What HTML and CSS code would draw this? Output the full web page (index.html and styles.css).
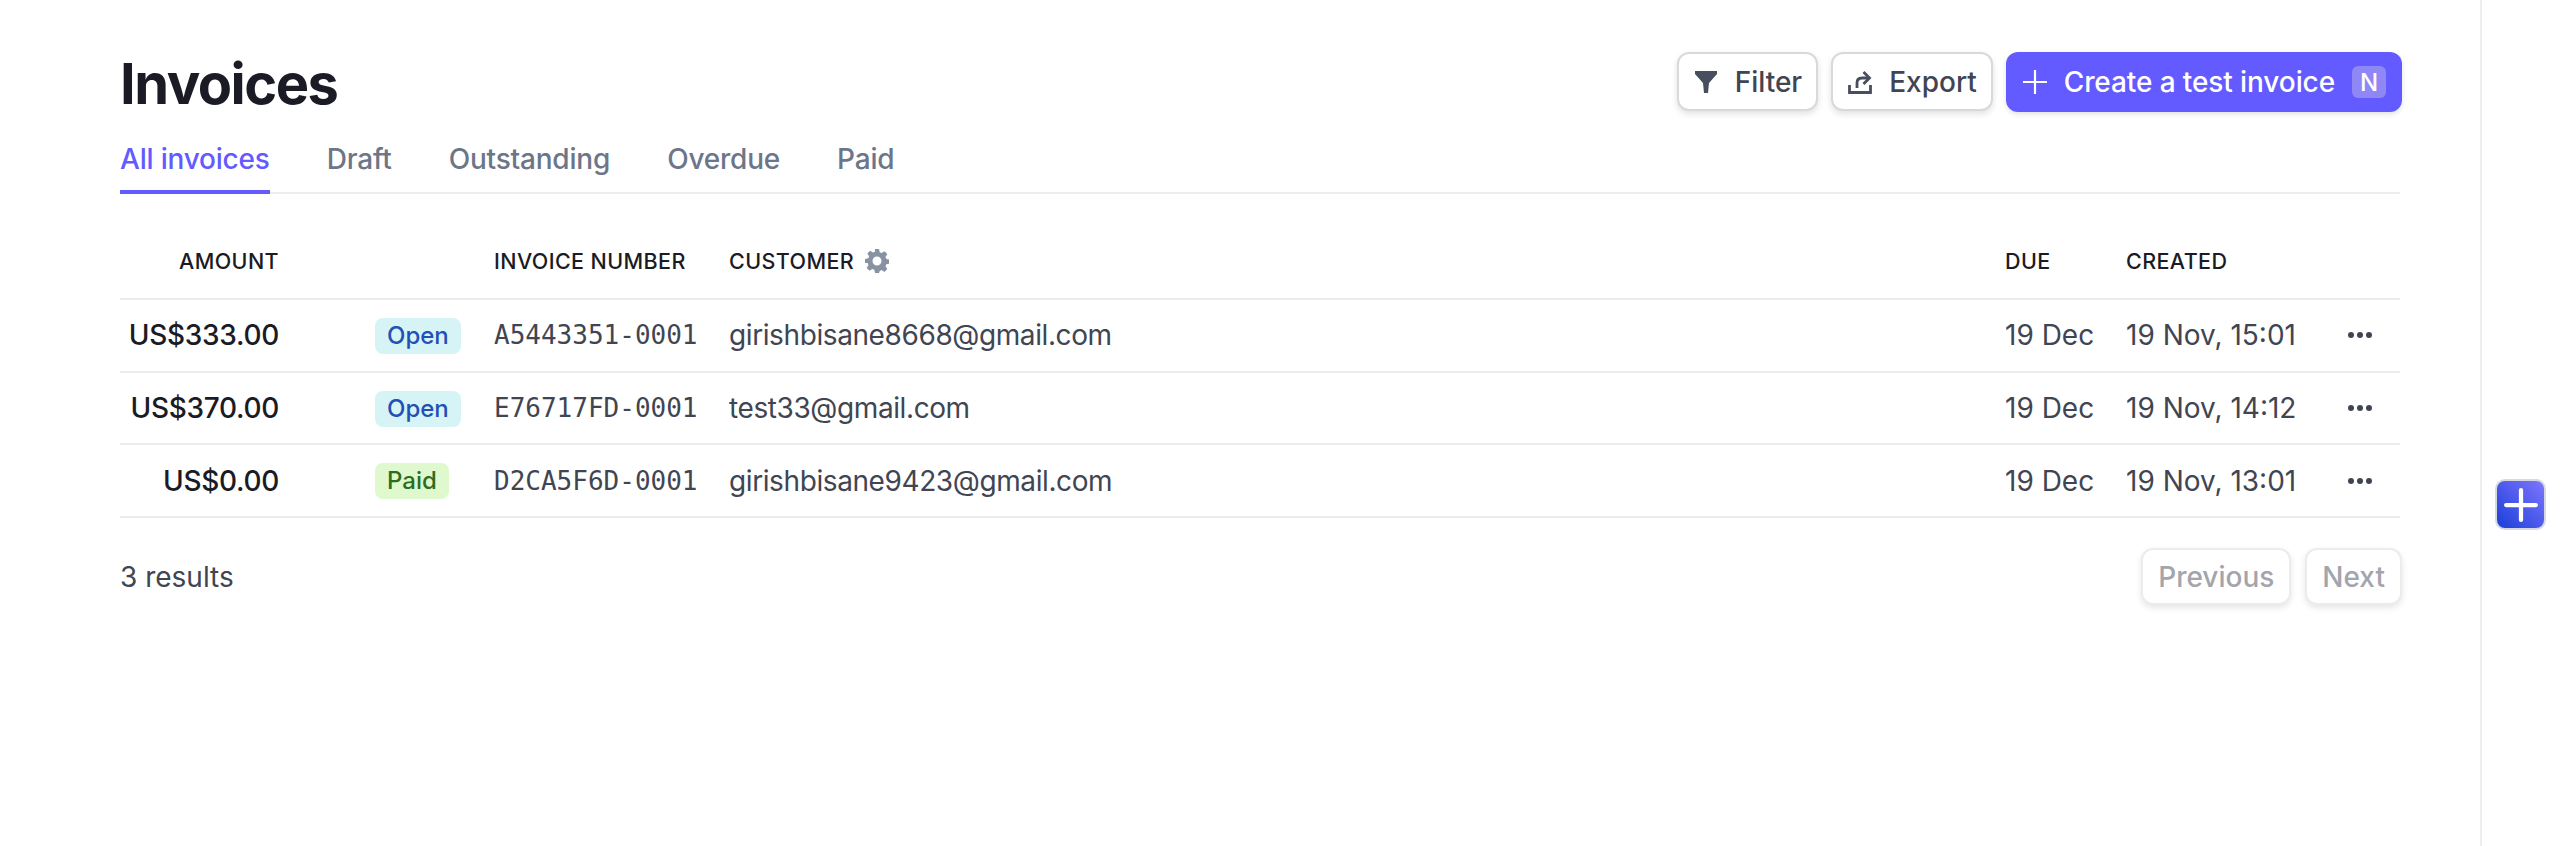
FILE: index.html
```html
<!DOCTYPE html>
<html lang="en">
<head>
    <meta charset="UTF-8">
    <title>Invoices</title>
    <link rel="stylesheet" href="styles.css">
</head>
<body>
    <main class="content">
        <header class="page-head">
            <h1>Invoices</h1>
            <div class="actions">
                <button class="btn">
                    <svg class="btn-icon" viewBox="0 0 24 24"><path d="M1 1h22v3l-8 9-1 10h-4l-1-10-8-9z" fill="#474e5e"/></svg>
                    Filter
                </button>
                <button class="btn">
                    <svg class="btn-icon" viewBox="0 0 24 24" fill="none" stroke="#474e5e" stroke-width="2.8"><path d="M1.500 15v7.500h21V15"/><path d="M9 18v-5c0-3 1.500-5 5-5h7"/><path d="M15.500 2l6 6-6 6"/></svg>
                    Export
                </button>
                <button class="btn btn-primary">
                    <svg class="btn-icon" viewBox="0 0 24 24" fill="none" stroke="#fff" stroke-width="2.2"><path d="M12 0v24M0 12h24"/></svg>
                    Create a test invoice
                    <span class="key">N</span>
                </button>
            </div>
        </header>

        <nav class="tabs">
            <a class="tab active">All invoices</a>
            <a class="tab">Draft</a>
            <a class="tab">Outstanding</a>
            <a class="tab">Overdue</a>
            <a class="tab">Paid</a>
        </nav>

        <table class="invoices">
            <colgroup>
                <col class="col-amount">
                <col class="col-status">
                <col class="col-number">
                <col>
                <col class="col-due">
                <col class="col-created">
                <col class="col-more">
            </colgroup>
            <thead>
                <tr>
                    <th class="amount">AMOUNT</th>
                    <th></th>
                    <th>INVOICE NUMBER</th>
                    <th>
                        <span class="customer-head">CUSTOMER
                            <svg class="gear" viewBox="0 0 24 24"><path fill="#8792a2" fill-rule="evenodd" d="M10 0h4l.7 3.300 2 .8 2.800-1.800 2.800 2.800-1.800 2.800.8 2 3.300.7v4l-3.300.7-.8 2 1.800 2.800-2.800 2.800-2.800-1.800-2 .8L14 24h-4l-.7-3.300-2-.8-2.800 1.800-2.800-2.800 1.800-2.800-.8-2L0 14v-4l3.300-.7.8-2-1.800-2.800 2.800-2.800 2.800 1.800 2-.8zM12 7.500a4.500 4.500 0 1 0 0 9 4.500 4.500 0 0 0 0-9z"/></svg>
                        </span>
                    </th>
                    <th>DUE</th>
                    <th>CREATED</th>
                    <th></th>
                </tr>
            </thead>
            <tbody>
                <tr>
                    <td class="amount">US$333.00</td>
                    <td class="status"><span class="badge badge-open">Open</span></td>
                    <td class="number">A5443351-0001</td>
                    <td class="email">girishbisane8668@gmail.com</td>
                    <td>19 Dec</td>
                    <td>19 Nov, 15:01</td>
                    <td class="more"><span class="dots"><i></i><i></i><i></i></span></td>
                </tr>
                <tr>
                    <td class="amount">US$370.00</td>
                    <td class="status"><span class="badge badge-open">Open</span></td>
                    <td class="number">E76717FD-0001</td>
                    <td class="email">test33@gmail.com</td>
                    <td>19 Dec</td>
                    <td>19 Nov, 14:12</td>
                    <td class="more"><span class="dots"><i></i><i></i><i></i></span></td>
                </tr>
                <tr>
                    <td class="amount">US$0.00</td>
                    <td class="status"><span class="badge badge-paid">Paid</span></td>
                    <td class="number">D2CA5F6D-0001</td>
                    <td class="email">girishbisane9423@gmail.com</td>
                    <td>19 Dec</td>
                    <td>19 Nov, 13:01</td>
                    <td class="more"><span class="dots"><i></i><i></i><i></i></span></td>
                </tr>
            </tbody>
        </table>

        <footer class="table-foot">
            <span>3 results</span>
            <div class="pager">
                <button class="btn btn-disabled">Previous</button>
                <button class="btn btn-disabled">Next</button>
            </div>
        </footer>
    </main>
    <aside class="rail">
        <button class="fab">
            <svg viewBox="0 0 32 32" fill="none" stroke="#fff" stroke-width="4" stroke-linecap="round"><path d="M16 2v28M2 16h28"/></svg>
        </button>
    </aside>
</body>
</html>
```

FILE: styles.css
```css
* {
    box-sizing: border-box;
}
html, body {
    height: 100%;
}
body {
    display: flex;
    margin: 0;
    font-family: Inter, "Liberation Sans", sans-serif;
    font-size: 28px;
    color: #414552;
    background: #fff;
    overflow: hidden;
}
.content {
    width: 2482px;
    height: 100%;
    padding: 0 80px 0 120px;
    border-right: 2px solid #ebeef1;
}
.rail {
    flex: 1;
    padding: 479px 0 0 13px;
}

.page-head {
    display: flex;
    justify-content: space-between;
    align-items: flex-start;
    height: 128px;
    padding-top: 52px;
}
h1 {
    margin: 0;
    font-size: 56px;
    line-height: 64px;
    font-weight: 700;
    color: #1a1b25;
    letter-spacing: -1.500px;
}
.actions {
    display: flex;
    gap: 13px;
    margin-right: -2px;
}
.btn {
    display: flex;
    align-items: center;
    height: 59px;
    padding: 0 14px 0 15px;
    font: 500 28px Inter, sans-serif;
    color: #414552;
    background: #fff;
    border: 2px solid #d8d9dd;
    border-radius: 12px;
    box-shadow: 0 3px 6px rgba(0,0,0,0.12);
}
.btn-icon {
    width: 24px;
    height: 24px;
    margin-right: 17px;
    flex: none;
}
.btn-primary {
    height: 60px;
    padding: 0 16px 0 17px;
    color: #fff;
    background: #635bff;
    border: 0;
    box-shadow: 0 2px 5px rgba(60,66,87,0.16);
    letter-spacing: -0.1px;
}
.key {
    display: flex;
    align-items: center;
    justify-content: center;
    width: 34px;
    height: 32px;
    margin-left: 17px;
    font-size: 24px;
    background: #8e87f5;
    border-radius: 6px;
}
.btn-disabled {
    height: 57px;
    padding: 0 15px;
    color: #a3a5ad;
    border-color: #ebecef;
    box-shadow: 0 3px 6px rgba(0,0,0,0.1);
}

.tabs {
    display: flex;
    gap: 57px;
    height: 66px;
    border-bottom: 2px solid #ebeef1;
    font-weight: 500;
    color: #6c7688;
    letter-spacing: -0.2px;
}
.tab {
    height: 66px;
    line-height: 62px;
}
.tab.active {
    color: #635bff;
    border-bottom: 4px solid #635bff;
}

.invoices {
    width: 100%;
    table-layout: fixed;
    border-collapse: collapse;
}
.col-amount { width: 159px; }
.col-status { width: 215px; }
.col-number { width: 235px; }
.col-due { width: 121px; }
.col-created { width: 214px; }
.col-more { width: 60px; }
th {
    height: 105px;
    padding: 30px 0 0;
    text-align: left;
    font-size: 21.500px;
    font-weight: 500;
    letter-spacing: 0.4px;
    color: #1a1b25;
}
td {
    height: 72.700px;
    padding: 0;
    white-space: nowrap;
}
tr {
    border-bottom: 2px solid #ebeef1;
}
.amount {
    text-align: right;
}
td.amount {
    font-weight: 500;
    color: #1a1b25;
    letter-spacing: -0.3px;
}
.email {
    letter-spacing: -0.4px;
}
.customer-head {
    display: flex;
    align-items: center;
    gap: 11px;
}
.gear {
    width: 24px;
    height: 24px;
}
.status {
    padding-left: 96px;
}
.badge {
    display: inline-block;
    height: 36px;
    padding: 0 12px;
    line-height: 36px;
    font-size: 24px;
    font-weight: 500;
    border-radius: 8px;
    vertical-align: middle;
}
.badge-open {
    color: #2250b5;
    background: #d6f4f6;
}
.badge-paid {
    color: #2d6e1e;
    background: #dff8cd;
}
.number {
    font-family: "DejaVu Sans Mono", monospace;
    font-size: 26px;
}
.more {
    padding-left: 8px;
}
.dots {
    display: flex;
    gap: 3px;
}
.dots i {
    width: 6px;
    height: 6px;
    background: #414552;
    border-radius: 50%;
}

.table-foot {
    display: flex;
    justify-content: space-between;
    align-items: center;
    padding-top: 30px;
}
.pager {
    display: flex;
    gap: 14px;
    margin-right: -2px;
}

.fab {
    display: flex;
    align-items: center;
    justify-content: center;
    width: 51px;
    height: 51px;
    padding: 0;
    background: linear-gradient(45deg, #1a3fd8, #7f75ff);
    border: 2px solid #d5d9e2;
    border-radius: 10px;
}
.fab svg {
    width: 34px;
    height: 34px;
}
```
